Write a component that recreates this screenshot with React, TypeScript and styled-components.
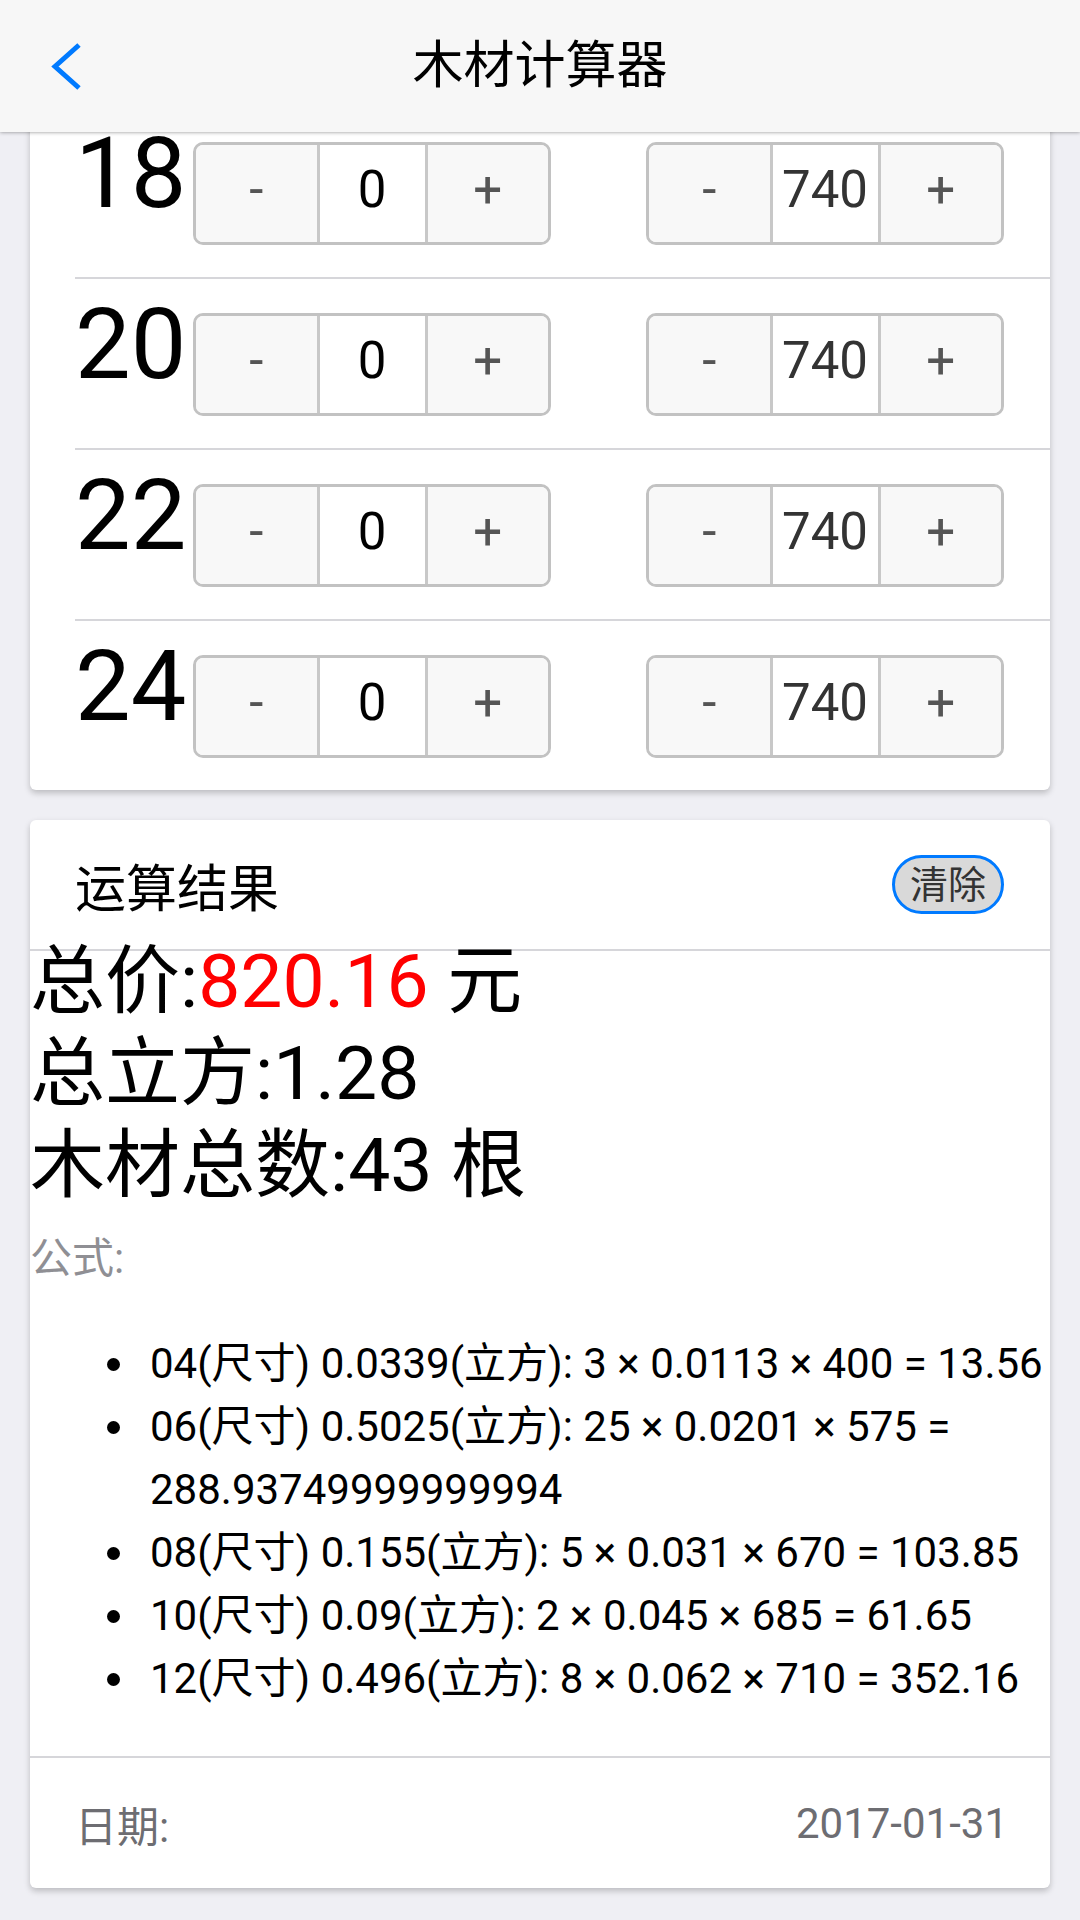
import React from "react";
import styled, { createGlobalStyle } from "styled-components";

const GlobalStyle = createGlobalStyle`
  html, body {
    margin: 0;
    padding: 0;
    background: #efeff4;
  }
  body {
    font-family: Roboto, "Noto Sans CJK SC", sans-serif;
    color: #000;
    -webkit-font-smoothing: antialiased;
  }
  * { box-sizing: border-box; }
`;

const Page = styled.div`
  min-height: 1920px;
  background: #efeff4;
`;

const NavBar = styled.header`
  position: fixed;
  top: 0;
  left: 0;
  right: 0;
  height: 132px;
  background: #f7f7f7;
  box-shadow: 0 0 4px rgba(0, 0, 0, 0.45);
  display: grid;
  grid-template-columns: 132px 1fr 132px;
  align-items: center;
  z-index: 10;
`;

const BackButton = styled.div`
  display: flex;
  align-items: center;
  height: 100%;
  padding-left: 50px;
`;

const Title = styled.h1`
  margin: 0;
  text-align: center;
  font-size: 51px;
  font-weight: 400;
  line-height: 132px;
  color: #000;
`;

const Main = styled.main`
  display: flex;
  flex-direction: column;
  gap: 30px;
  padding: 108px 30px 30px;
`;

const Card = styled.section`
  background: #fff;
  border-radius: 6px;
  box-shadow: 0 3px 6px rgba(0, 0, 0, 0.22);
  overflow: hidden;
`;

const Row = styled.div`
  display: flex;
  align-items: baseline;
  margin-left: 45px;
  padding: 16px 46px 32px 0;
  border-bottom: 2px solid #d6d6da;
  &:last-child {
    border-bottom: none;
  }
`;

const SizeLabel = styled.span`
  flex: none;
  width: 118px;
  font-size: 99px;
  line-height: 99px;
  color: #000;
`;

const NumBox = styled.div<{ $pushRight?: boolean }>`
  display: flex;
  flex: none;
  width: 358px;
  height: 103px;
  border: 3px solid #c2c2c2;
  border-radius: 10px;
  overflow: hidden;
  margin-left: ${(p) => (p.$pushRight ? "auto" : "0")};
`;

const NumButton = styled.div`
  flex: 1;
  display: flex;
  align-items: center;
  justify-content: center;
  padding-bottom: 7px;
  background: #f8f8f8;
  font-size: 51px;
  line-height: 90px;
  color: #555;
`;

const NumValue = styled.div<{ $muted?: boolean }>`
  flex: none;
  width: 111px;
  display: flex;
  align-items: center;
  justify-content: center;
  padding-bottom: 7px;
  border-left: 3px solid #c8c8c8;
  border-right: 3px solid #c8c8c8;
  background: #fff;
  font-size: 51px;
  line-height: 90px;
  color: ${(p) => (p.$muted ? "#333" : "#000")};
`;

const CardHeader = styled.div`
  display: flex;
  align-items: center;
  justify-content: space-between;
  height: 131px;
  padding: 0 46px 0 45px;
  border-bottom: 2px solid #d6d6da;
  font-size: 51px;
  color: #000;
`;

const ClearButton = styled.button`
  height: 59px;
  padding: 0 15px;
  border: 3px solid #007aff;
  border-radius: 30px;
  background: #d9d9d9;
  color: #333;
  font-family: inherit;
  font-size: 38px;
  line-height: 1;
`;

const CardBody = styled.div``;

const Results = styled.div`
  margin-top: -16px;
  font-size: 75px;
  line-height: 92px;
  color: #000;
`;

const Price = styled.span`
  color: #ff0000;
`;

const FormulaLabel = styled.p`
  margin: 16px 0 42px;
  font-size: 42px;
  line-height: 63px;
  color: #8f8f94;
`;

const FormulaList = styled.ul`
  margin: 42px 0 46px;
  padding-left: 110px;
  font-size: 42px;
  line-height: 63px;
  color: #000;
`;

const FormulaItem = styled.li`
  padding-left: 10px;
`;

const CardFooter = styled.div`
  display: flex;
  align-items: center;
  justify-content: space-between;
  height: 132px;
  padding: 0 42px 0 45px;
  border-top: 2px solid #d6d6da;
  font-size: 42px;
  color: #6d6d72;
`;

const rows = ["18", "20", "22", "24"];

const formulas = [
  "04(尺寸) 0.0339(立方): 3 × 0.0113 × 400 = 13.56",
  "06(尺寸) 0.5025(立方): 25 × 0.0201 × 575 = 288.93749999999994",
  "08(尺寸) 0.155(立方): 5 × 0.031 × 670 = 103.85",
  "10(尺寸) 0.09(立方): 2 × 0.045 × 685 = 61.65",
  "12(尺寸) 0.496(立方): 8 × 0.062 × 710 = 352.16",
];

const Stepper: React.FC<{ value: string; muted?: boolean; pushRight?: boolean }> = ({
  value,
  muted,
  pushRight,
}) => (
  <NumBox $pushRight={pushRight}>
    <NumButton>-</NumButton>
    <NumValue $muted={muted}>{value}</NumValue>
    <NumButton>+</NumButton>
  </NumBox>
);

export default function App() {
  return (
    <Page>
      <GlobalStyle />
      <NavBar>
        <BackButton>
          <svg width="32" height="48" viewBox="0 0 32 48">
            <polyline
              points="29,3 5,24.5 29,46"
              fill="none"
              stroke="#007aff"
              strokeWidth="5"
              strokeLinejoin="miter"
            />
          </svg>
        </BackButton>
        <Title>木材计算器</Title>
        <div />
      </NavBar>
      <Main>
        <Card>
          {rows.map((r) => (
            <Row key={r}>
              <SizeLabel>{r}</SizeLabel>
              <Stepper value="0" />
              <Stepper value="740" muted pushRight />
            </Row>
          ))}
        </Card>
        <Card>
          <CardHeader>
            <span>运算结果</span>
            <ClearButton>清除</ClearButton>
          </CardHeader>
          <CardBody>
            <Results>
              <div>
                总价:<Price>820.16</Price> 元
              </div>
              <div>总立方:1.28</div>
              <div>木材总数:43 根</div>
            </Results>
            <FormulaLabel>公式:</FormulaLabel>
            <FormulaList>
              {formulas.map((f) => (
                <FormulaItem key={f}>{f}</FormulaItem>
              ))}
            </FormulaList>
          </CardBody>
          <CardFooter>
            <span>日期:</span>
            <span>2017-01-31</span>
          </CardFooter>
        </Card>
      </Main>
    </Page>
  );
}
